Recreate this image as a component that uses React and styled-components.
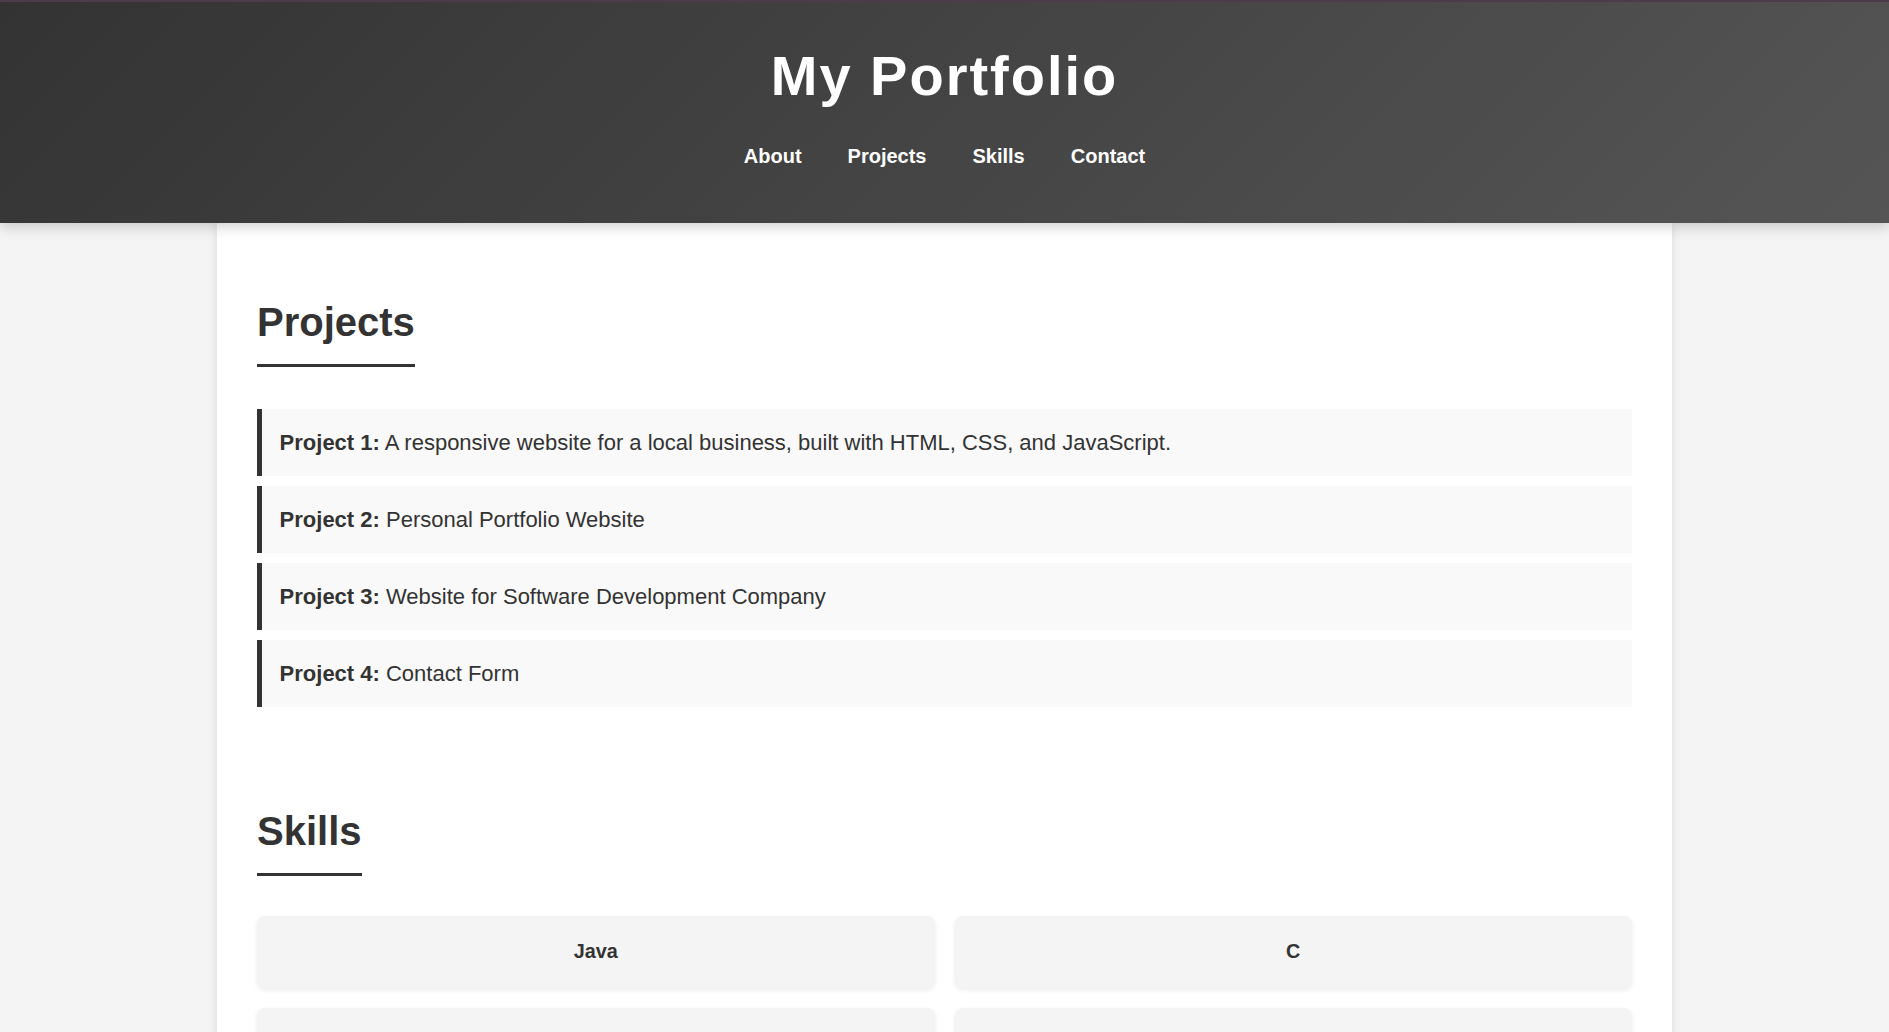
import React from "react";
import styled, { createGlobalStyle } from "styled-components";

const projects = [
  {
    name: "Project 1:",
    desc: "A responsive website for a local business, built with HTML, CSS, and JavaScript.",
  },
  { name: "Project 2:", desc: "Personal Portfolio Website" },
  { name: "Project 3:", desc: "Website for Software Development Company" },
  { name: "Project 4:", desc: "Contact Form" },
];

const skills = ["Java", "C", "Python", "JavaScript"];

const navLinks = ["About", "Projects", "Skills", "Contact"];

const GlobalStyle = createGlobalStyle`
  * {
    box-sizing: border-box;
  }
  body {
    margin: 0;
    background: #f4f4f4;
    color: #333;
    font-family: "Liberation Sans", Arial, sans-serif;
  }
`;

const App = () => {
  return (
    <>
      <GlobalStyle />
      <Header>
        <Title>My Portfolio</Title>
        <Nav>
          {navLinks.map((link) => (
            <NavLink key={link} href={`#${link.toLowerCase()}`}>
              {link}
            </NavLink>
          ))}
        </Nav>
      </Header>
      <Container>
        <Section id="projects">
          <SectionTitle>Projects</SectionTitle>
          <ProjectList>
            {projects.map((p) => (
              <ProjectItem key={p.name}>
                <strong>{p.name}</strong> {p.desc}
              </ProjectItem>
            ))}
          </ProjectList>
        </Section>
        <Section id="skills">
          <SectionTitle>Skills</SectionTitle>
          <SkillGrid>
            {skills.map((s) => (
              <SkillCard key={s}>{s}</SkillCard>
            ))}
          </SkillGrid>
        </Section>
      </Container>
    </>
  );
};

export default App;

const Header = styled.header`
  position: relative;
  z-index: 2;
  height: 223px;
  padding-top: 44px;
  background: linear-gradient(135deg, #333 0%, #555 100%);
  border-top: 2px solid #4a3d48;
  box-shadow: 0 4px 12px rgba(0, 0, 0, 0.18);
  text-align: center;
  color: #fff;
`;

const Title = styled.h1`
  margin: -2px 0 37px;
  font-size: 56px;
  font-weight: 700;
  letter-spacing: 2px;
  line-height: 64px;
`;

const Nav = styled.nav`
  display: flex;
  justify-content: center;
  gap: 46px;
`;

const NavLink = styled.a`
  color: #fff;
  text-decoration: none;
  font-size: 20px;
  font-weight: 700;
  line-height: 23px;
`;

const Container = styled.main`
  position: relative;
  z-index: 1;
  width: 1455px;
  margin: 0 auto;
  padding: 0 40px 40px;
  background: #fff;
  box-shadow: 0 0 10px rgba(0, 0, 0, 0.1);
`;

const Section = styled.section`
  padding: 76px 0 25px;
`;

const SectionTitle = styled.h2`
  display: inline-block;
  margin: 0 0 40px;
  padding-bottom: 19px;
  border-bottom: 3px solid #333;
  font-size: 40px;
  font-weight: 700;
  line-height: 46px;
  color: #333;
`;

const ProjectList = styled.div`
  display: flex;
  flex-direction: column;
  gap: 10px;
  margin-top: 2px;
`;

const ProjectItem = styled.div`
  padding: 16px 17.6px;
  background: #f9f9f9;
  border-left: 5px solid #333;
  font-size: 22px;
  line-height: 35px;
  color: #333;
`;

const SkillGrid = styled.div`
  display: grid;
  grid-template-columns: 1fr 1fr;
  gap: 20px;
`;

const SkillCard = styled.div`
  padding: 20px;
  background: #f4f4f4;
  border-radius: 8px;
  box-shadow: 0 2px 5px rgba(0, 0, 0, 0.08);
  text-align: center;
  font-size: 19.8px;
  font-weight: 700;
  line-height: 31.7px;
  color: #333;
`;
